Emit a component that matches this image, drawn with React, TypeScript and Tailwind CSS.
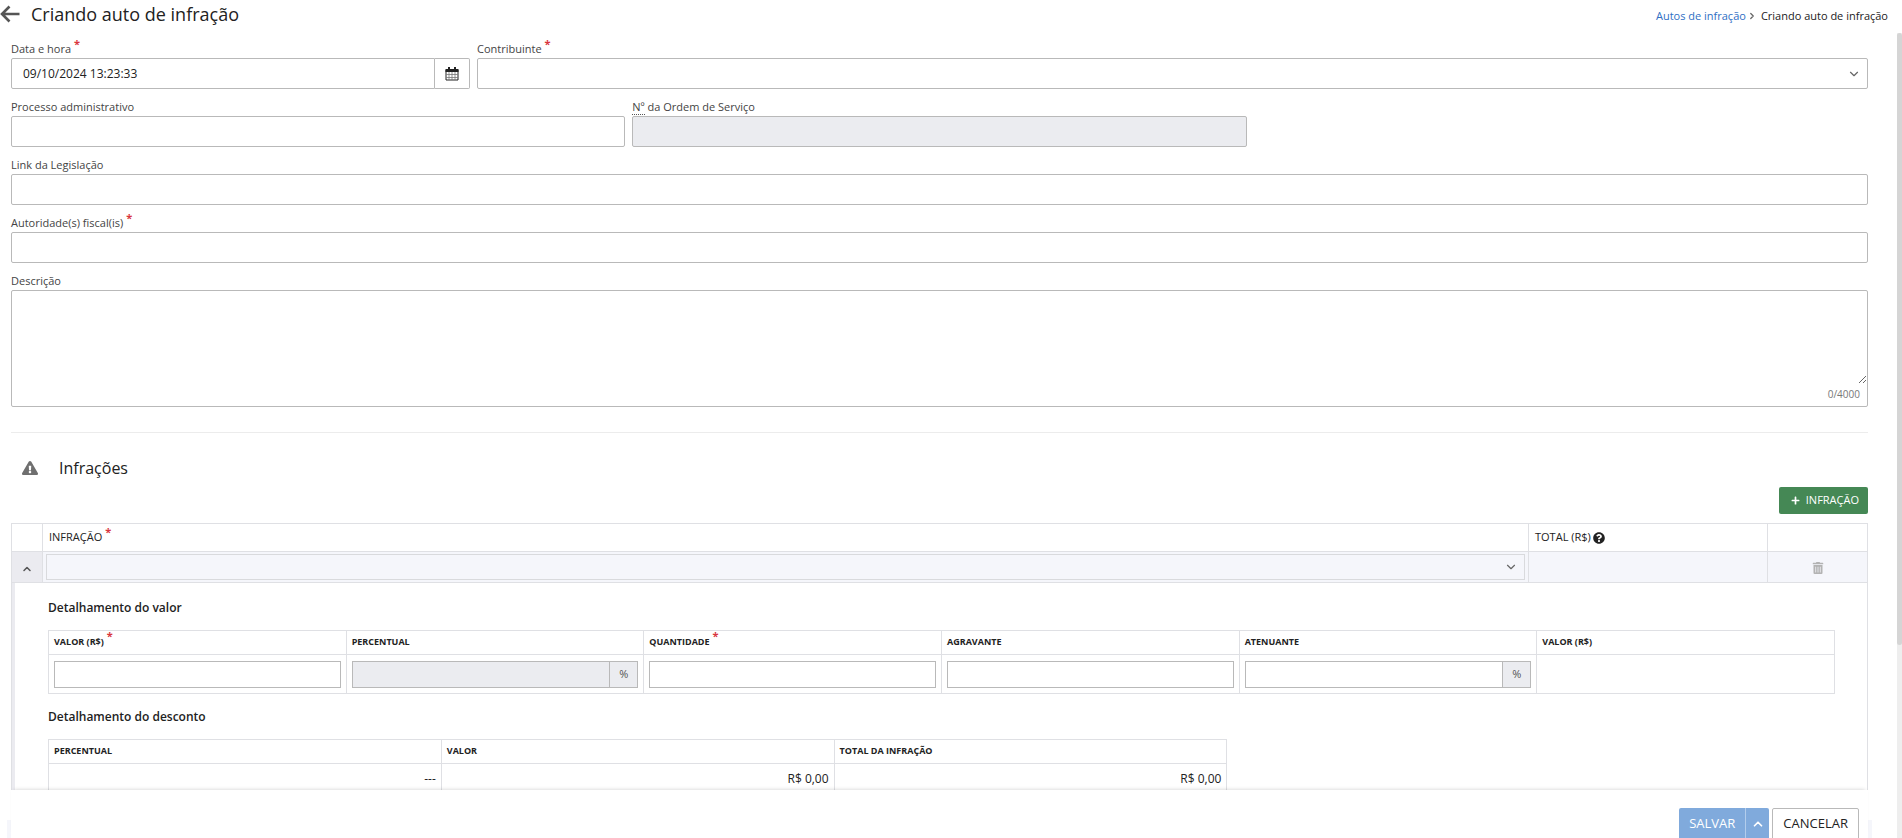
import { InputHTMLAttributes, ReactNode } from 'react';
import { ChevronDown, ChevronRight, ChevronUp } from 'lucide-react';
import { FaExclamationTriangle, FaPlus, FaQuestionCircle, FaTrashAlt } from 'react-icons/fa';

const CELL = 'border border-[#dfe0e4]';

function ArrowLeftIcon() {
  return (
    <svg viewBox="0 0 20 18" className="h-[18px] w-5 fill-none stroke-[#555555]" strokeWidth="2.6" aria-hidden="true">
      <path d="M19.500 9H2.500M9.500 1.500 2 9l7.500 7.500" />
    </svg>
  );
}

function CalendarIcon() {
  return (
    <svg viewBox="0 0 14 14" className="size-[14px]" aria-hidden="true">
      <path d="M1 3h12v10H1z" fill="#ffffff" stroke="#222222" />
      <path d="M4 5v8M7 5v8M10 5v8M1 7.500h12M1 10.500h12" fill="none" stroke="#777777" strokeWidth="0.800" />
      <path d="M0.500 2h13v3h-13zM3 0h2v3H3zM9 0h2v3H9z" fill="#222222" />
    </svg>
  );
}

function Required() {
  return <span className="ml-[3px] align-[5px] text-[11px] leading-[0] font-bold text-[#d9363e]">*</span>;
}

interface FieldProps {
  id: string;
  label: ReactNode;
  required?: boolean;
  className?: string;
  children: ReactNode;
}

function Field({ id, label, required, className, children }: FieldProps) {
  return (
    <div className={`pb-px ${className ?? ''}`}>
      <label htmlFor={id} className="block h-[26px] pt-2 text-[11px] leading-[18px] text-[#444444]">
        {label}
        {required && <Required />}
      </label>
      {children}
    </div>
  );
}

function TextInput(props: InputHTMLAttributes<HTMLInputElement>) {
  return (
    <input
      type="text"
      className="block h-[31px] w-full rounded-xs border border-[#b9b9b9] bg-white px-[11px] text-xs text-[#222222] outline-none focus:border-blue-500 disabled:bg-[#ebecf0]"
      {...props}
    />
  );
}

interface CellInputProps {
  label: string;
  suffix?: string;
  disabled?: boolean;
}

function CellInput({ label, suffix, disabled }: CellInputProps) {
  return (
    <div className="flex h-[27px] w-full">
      <input
        type="text"
        aria-label={label}
        disabled={disabled}
        className="h-full min-w-0 flex-1 border border-[#b9b9b9] px-2 text-xs outline-none focus:border-blue-500 disabled:bg-[#ebecf0]"
      />
      {suffix && (
        <span className="flex w-7 items-center justify-center border border-l-0 border-[#b9b9b9] bg-[#ebecf0] text-[11px] text-[#555555]">
          {suffix}
        </span>
      )}
    </div>
  );
}

const valueColumns = [
  { title: 'VALOR (R$)', required: true, input: true },
  { title: 'PERCENTUAL', input: true, suffix: '%', disabled: true },
  { title: 'QUANTIDADE', required: true, input: true },
  { title: 'AGRAVANTE', input: true },
  { title: 'ATENUANTE', input: true, suffix: '%' },
  { title: 'VALOR (R$)' },
];

const discountColumns = [
  { title: 'PERCENTUAL', value: '---' },
  { title: 'VALOR', value: 'R$ 0,00' },
  { title: 'TOTAL DA INFRAÇÃO', value: 'R$ 0,00' },
];

function ValueTable() {
  return (
    <table className="w-full table-fixed border-collapse">
      <thead>
        <tr className="h-6">
          {valueColumns.map((column, index) => (
            <th key={index} className={`${CELL} px-[5px] pb-[2px] text-left text-[9px] leading-4 font-bold`}>
              {column.title}
              {column.required && <Required />}
            </th>
          ))}
        </tr>
      </thead>
      <tbody>
        <tr className="h-[39px]">
          {valueColumns.map((column, index) => (
            <td key={index} className={`${CELL} px-[5px]`}>
              {column.input && (
                <CellInput label={column.title} suffix={column.suffix} disabled={column.disabled} />
              )}
            </td>
          ))}
        </tr>
      </tbody>
    </table>
  );
}

function DiscountTable() {
  return (
    <table className="w-[66%] table-fixed border-collapse">
      <thead>
        <tr className="h-6">
          {discountColumns.map((column) => (
            <th key={column.title} className={`${CELL} px-[5px] pb-[2px] text-left text-[9px] leading-4 font-bold`}>
              {column.title}
            </th>
          ))}
        </tr>
      </thead>
      <tbody>
        <tr className="h-[30px]">
          {discountColumns.map((column) => (
            <td key={column.title} className={`${CELL} px-[5px] text-right text-xs leading-5`}>
              {column.value}
            </td>
          ))}
        </tr>
      </tbody>
    </table>
  );
}

function InfractionTable() {
  return (
    <table className="mt-[9px] w-full table-fixed border-collapse">
      <colgroup>
        <col className="w-[31px]" />
        <col />
        <col className="w-[239px]" />
        <col className="w-[100px]" />
      </colgroup>
      <thead>
        <tr className="h-7 text-left text-[11px]">
          <th className={CELL} aria-label="Expandir" />
          <th className={`${CELL} px-[6px] font-normal`}>
            INFRAÇÃO
            <Required />
          </th>
          <th className={`${CELL} px-[6px] font-normal`}>
            <span className="flex items-center gap-[2px]">
              TOTAL (R$)
              <FaQuestionCircle className="size-3" />
            </span>
          </th>
          <th className={CELL} aria-label="Ações" />
        </tr>
      </thead>
      <tbody>
        <tr className="h-[31px] bg-[#f5f6fb]">
          <td className={`${CELL} bg-[#ebebf0] text-center`}>
            <button type="button" aria-label="Recolher" className="align-middle text-[#555555]">
              <ChevronUp className="size-3" strokeWidth={3} />
            </button>
          </td>
          <td className={`${CELL} px-[3px]`}>
            <div className="relative">
              <select
                aria-label="Infração"
                className="block h-[26px] w-full appearance-none border border-[#d9dadd] bg-transparent px-2 text-xs outline-none"
              />
              <ChevronDown className="pointer-events-none absolute top-[6px] right-[7px] size-[14px] text-[#666666]" />
            </div>
          </td>
          <td className={CELL} />
          <td className={`${CELL} pb-[2px] text-center`}>
            <button type="button" aria-label="Excluir" className="align-middle text-[#b3b3b3]">
              <FaTrashAlt className="size-3" />
            </button>
          </td>
        </tr>
        <tr>
          <td colSpan={4} className={`${CELL} p-0`}>
            <div className="border-l-3 border-[#ebebf0] pr-8 pb-8 pl-[33px]">
              <h3 className="pt-[15px] pb-3 text-xs leading-5 font-semibold">Detalhamento do valor</h3>
              <ValueTable />
              <h3 className="pt-[13px] pb-3 text-xs leading-5 font-semibold">Detalhamento do desconto</h3>
              <DiscountTable />
            </div>
          </td>
        </tr>
      </tbody>
    </table>
  );
}

export default function App() {
  return (
    <div className="flex h-screen flex-col overflow-hidden bg-white font-['Open_Sans',sans-serif] text-[#222222]">
      <header className="flex h-8 shrink-0 items-center justify-between pr-[14px] pb-1">
        <div className="flex items-center gap-[11px]">
          <button type="button" aria-label="Voltar">
            <ArrowLeftIcon />
          </button>
          <h1 className="text-lg leading-6">Criando auto de infração</h1>
        </div>
        <nav className="flex items-center pt-1 text-[11px] leading-4">
          <a href="#autos" className="text-[#2f6fc4]">
            Autos de infração
          </a>
          <ChevronRight className="mr-1 ml-px size-[10px] text-[#666666]" strokeWidth={3} aria-hidden="true" />
          <span>Criando auto de infração</span>
        </nav>
      </header>

      <div className="flex min-h-0 flex-1">
        <div className="flex min-w-0 flex-1 flex-col">
          <main className="min-h-0 flex-1 overflow-hidden pr-[29px] pl-[11px]">
            <div className="grid grid-cols-4 gap-x-[7px]">
              <Field id="data" label="Data e hora" required>
                <div className="flex h-[31px]">
                  <input
                    id="data"
                    type="text"
                    defaultValue="09/10/2024 13:23:33"
                    className="h-full min-w-0 flex-1 rounded-l-xs border border-[#b9b9b9] px-[11px] text-xs outline-none focus:border-blue-500"
                  />
                  <button
                    type="button"
                    aria-label="Abrir calendário"
                    className="flex w-[35px] items-center justify-center rounded-r-xs border border-l-0 border-[#b9b9b9]"
                  >
                    <CalendarIcon />
                  </button>
                </div>
              </Field>
              <Field id="contribuinte" label="Contribuinte" required className="col-span-3">
                <div className="relative">
                  <select
                    id="contribuinte"
                    className="block h-[31px] w-full appearance-none rounded-xs border border-[#b9b9b9] px-[11px] text-xs outline-none"
                  />
                  <ChevronDown className="pointer-events-none absolute top-[9px] right-[7px] size-[14px] text-[#666666]" />
                </div>
              </Field>
            </div>

            <div className="grid grid-cols-3 gap-x-[7px]">
              <Field id="processo" label="Processo administrativo">
                <TextInput id="processo" />
              </Field>
              <Field
                id="ordem"
                label={
                  <>
                    <abbr className="border-b border-dotted border-[#555555]">Nº</abbr> da Ordem de Serviço
                  </>
                }
              >
                <TextInput id="ordem" disabled />
              </Field>
            </div>

            <Field id="link" label="Link da Legislação">
              <TextInput id="link" />
            </Field>

            <Field id="autoridades" label="Autoridade(s) fiscal(is)" required>
              <TextInput id="autoridades" />
            </Field>

            <Field id="descricao" label="Descrição">
              <div className="rounded-xs border border-[#b9b9b9]">
                <textarea
                  id="descricao"
                  maxLength={4000}
                  className="block h-[93px] w-full resize-y px-[10px] py-1 text-xs outline-none"
                />
                <p className="px-[7px] pt-[2px] pb-1 text-right text-[10px] leading-4 text-[#777777]">0/4000</p>
              </div>
            </Field>

            <hr className="mt-6 border-[#ececec]" />

            <section>
              <div className="flex h-[54px] items-center gap-[21px] pt-4 pl-[11px]">
                <FaExclamationTriangle className="size-4 text-[#6f6f6f]" />
                <h2 className="text-base leading-6">Infrações</h2>
              </div>
              <div className="flex justify-end">
                <button
                  type="button"
                  className="flex h-[27px] items-center gap-[6px] rounded-xs bg-[#458855] pr-[9px] pl-3 text-[11px] text-white"
                >
                  <FaPlus className="size-[9px]" />
                  INFRAÇÃO
                </button>
              </div>
              <InfractionTable />
            </section>
          </main>

          <div className="flex h-12 shrink-0 pr-[25px] pl-[7px]">
            <div className="h-[18px] w-1 self-end bg-[#f5f6fb]" />
            <footer className="z-10 flex flex-1 items-start justify-end gap-[3px] bg-white pt-[18px] pr-[9px] shadow-[0_-3px_4px_-3px_rgba(0,0,0,0.2)]">
              <div className="flex h-8 rounded-xs bg-[#80aadc] text-white">
                <button type="button" className="px-[10px] text-[13px]">
                  SALVAR
                </button>
                <button
                  type="button"
                  aria-label="Mais opções"
                  className="flex w-6 items-center justify-center border-l border-[#b3cdec]"
                >
                  <ChevronUp className="size-[14px]" strokeWidth={3} />
                </button>
              </div>
              <button type="button" className="h-8 rounded-xs border border-[#b9b9b9] px-[10px] text-[13px]">
                CANCELAR
              </button>
            </footer>
            <div className="h-[18px] w-1 self-end bg-[#f5f6fb]" />
          </div>
        </div>

        <div className="mt-px w-[5px] bg-[#eeeeee]" aria-hidden="true">
          <div className="h-[76%] rounded-sm bg-[#d5d5d5]" />
        </div>
      </div>
    </div>
  );
}
